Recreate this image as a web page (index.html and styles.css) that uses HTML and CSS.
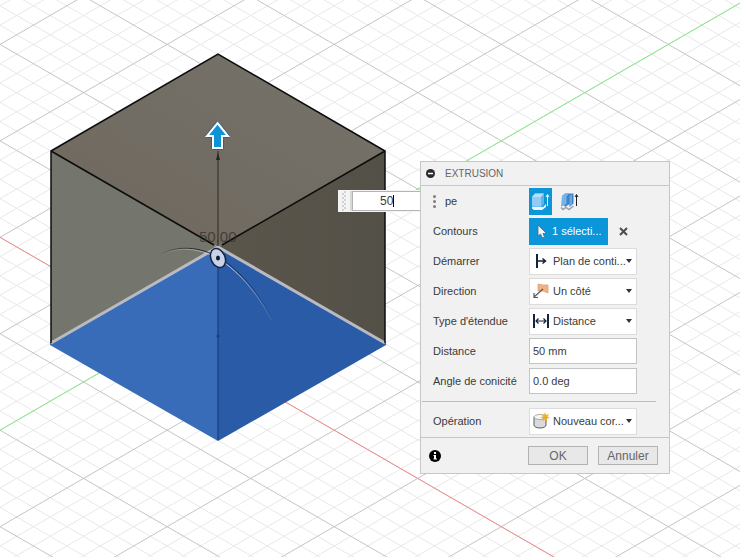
FILE: index.html
```html
<!DOCTYPE html>
<html lang="fr">
  <head>
    <meta charset="utf-8" />
    <meta name="viewport" content="width=device-width, initial-scale=1.0" />
    <title>Extrusion</title>
    <link rel="stylesheet" href="styles.css">
  </head>
  <body>
    <main class="viewport">
      <svg class="scene" aria-hidden="true">
        <defs>
          <linearGradient id="topFace" x1="0" y1="1" x2="1" y2="0">
            <stop offset="0" stop-color="#6f675e" />
            <stop offset="1" stop-color="#75736a" />
          </linearGradient>
          <linearGradient id="leftFace" x1="0" y1="0" x2="1" y2="1">
            <stop offset="0" stop-color="#74766e" />
            <stop offset="1" stop-color="#74756d" />
          </linearGradient>
          <linearGradient id="rightFace" x1="0" y1="0" x2="1" y2="0">
            <stop offset="0" stop-color="#5b564c" />
            <stop offset="1" stop-color="#535047" />
          </linearGradient>
          <linearGradient id="arc" x1="0" y1="0" x2="1" y2="0">
            <stop offset="0" stop-color="#222" stop-opacity="0.1" />
            <stop offset="0.3" stop-color="#222" />
            <stop offset="0.7" stop-color="#16335f" />
            <stop offset="1" stop-color="#16335f" stop-opacity="0.1" />
          </linearGradient>
          <linearGradient id="arcLight" x1="0" y1="0" x2="1" y2="0">
            <stop offset="0" stop-color="#ddd" stop-opacity="0" />
            <stop offset="0.6" stop-color="#c5d5ee" />
            <stop offset="1" stop-color="#c5d5ee" stop-opacity="0.1" />
          </linearGradient>
        </defs>

        <path id="minor" class="grid-minor" />
        <path id="major" class="grid-major" />
        <path id="axisX" class="axis-x" />
        <path id="axisY" class="axis-y" />

        <!-- cube -->
        <path d="M218 54 385 151 218 247 51 151Z" fill="url(#topFace)" />
        <path d="M51 151 218 247V440L51 344Z" fill="url(#leftFace)" />
        <path d="M385 151 218 247V440L385 344Z" fill="url(#rightFace)" />
        <path d="M218 247V441L50 345V343Z" fill="#386cb8" />
        <path d="M218 247V441L386 345V343Z" fill="#2a5ba6" />
        <path d="M51 343 218 247 385 343" fill="none" stroke="#b9bbc0" stroke-width="3" />
        <path class="edge" d="M51 343V151L218 54 385 151V343M51 151 214 245M385 151 222 245" />
        <path d="M218 249V440" stroke="#1d4585" stroke-width="1.5" />
        <circle cx="218" cy="336" r="1.5" fill="#1d3d75" />

        <!-- dimension line -->
        <path d="M218 151V246" stroke="#45403a" stroke-width="1.5" />
        <path d="M218 153 220 160H216Z" fill="#2a2020" />
        <text class="dimension" x="199" y="242">50.00</text>

        <!-- taper handle -->
        <path d="M161 254C174 247 195 245 216 256S258 291 273 320" fill="none" stroke="url(#arc)" />
        <path d="M162 255C175 248 194 246 215 257S257 292 272 321" fill="none" stroke="url(#arcLight)" />
        <ellipse cx="218" cy="258" rx="7" ry="10" transform="rotate(-24 218 258)" fill="#c8d3e9" stroke="#13243f" stroke-width="1.5" />
        <ellipse cx="218" cy="258" rx="2" ry="2.5" fill="#111c2c" />

        <!-- distance arrow -->
        <path d="M217.500 123 228 136H222V148H213V136H207Z" fill="none" stroke="#31597a" stroke-width="3.500" stroke-linejoin="round" />
        <path d="M217.500 123 228 136H222V148H213V136H207Z" fill="#0b94d6" stroke="#fff" stroke-width="2" />
      </svg>

      <div class="quick-input">
        <span class="grip"></span>
        <input class="quick-field" type="text" value="50" aria-label="Distance rapide">
        <span class="caret"></span>
      </div>

      <form class="panel">
        <header class="panel-header">
          <svg class="collapse" viewBox="0 0 9 9"><circle cx="4.500" cy="4.500" r="4.500" fill="#2b2b2b" /><path d="M2 4.500H7" stroke="#fff" stroke-width="1.500" /></svg>
          <h1 class="panel-title">EXTRUSION</h1>
        </header>

        <div class="row">
          <span class="label type-label">
            <svg class="dots" viewBox="0 0 3 13"><g fill="#7d7d7d"><circle cx="1.500" cy="1.500" r="1.500" /><circle cx="1.500" cy="6.500" r="1.500" /><circle cx="1.500" cy="11.500" r="1.500" /></g></svg>
            pe
          </span>
          <button class="type-btn active" type="button" aria-label="Extrusion">
            <svg class="type-icon" viewBox="0 0 19 19">
              <path d="M1 16.500 3 18H11L15 15V12L12 15H1Z" fill="#eef7fd" />
              <path d="M1 5 4 1.500H13V12L10.500 15H2L1 14Z" fill="#5fb2ea" />
              <path d="M1 5H10V14.500H2L1 14Z" fill="#8fccf6" />
              <path d="M1 5 4 1.500H13L10 5Z" fill="#b8e0fb" />
              <path d="M16.500 14V3M15 5 16.500 2.500 18 5" fill="none" stroke="#fff" />
            </svg>
          </button>
          <button class="type-btn" type="button" aria-label="Extrusion fine">
            <svg class="type-icon" viewBox="0 0 19 19">
              <path d="M1 15.500 3 17.500 6 15.500 9 17.500 13.500 14" fill="none" stroke="#98a2ac" stroke-width="1.500" />
              <path d="M2 4 5 1.500H13.500V11.500L9.500 15V12L5 15 4 13 1.500 14.500Z" fill="#3c84c9" />
              <path d="M2 4 5 1.500H9L6.500 4.500V12L4 13 1.500 14.500Z" fill="#75b4e8" />
              <path d="M9.500 4.500 12 2V12L9.500 14.500Z" fill="#68a9e2" />
              <path d="M16.500 14V3M15 5 16.500 2.500 18 5" fill="none" stroke="#222" />
            </svg>
          </button>
        </div>

        <div class="row">
          <span class="label">Contours</span>
          <button class="select-btn" type="button">
            <svg class="cursor" viewBox="0 0 10 15"><path d="M1 1V12L3.500 10 5.500 14 7.500 13 6 9.500H9.500Z" fill="#f4f4f4" stroke="#4c6d86" stroke-width="0.800" /></svg>
            1 sélecti...
          </button>
          <button class="clear-btn" type="button" aria-label="Effacer">
            <svg class="cross" viewBox="0 0 9 9"><path d="M1 1 8 8M8 1 1 8" stroke="#4d4d4d" stroke-width="2" /></svg>
          </button>
        </div>

        <div class="row">
          <label class="label" for="start">Démarrer</label>
          <div class="combo">
            <svg class="combo-icon" viewBox="0 0 18 18"><path d="M5 2V16" stroke="#14233b" stroke-width="2" /><path d="M5 9H13M10.500 6.500 13.500 9 10.500 11.500" fill="none" stroke="#14233b" stroke-width="1.500" /></svg>
            <select id="start"><option>Plan de conti...</option></select>
            <svg class="arrow" viewBox="0 0 6 4"><path d="M0 0H6L3 4Z" fill="#333" /></svg>
          </div>
        </div>

        <div class="row">
          <label class="label" for="direction">Direction</label>
          <div class="combo">
            <svg class="combo-icon" viewBox="0 0 18 18">
              <path d="M6 2 11 3 16 3V11L11 9 6 9Z" fill="#f0b184" stroke="#dca17a" stroke-width="0.800" />
              <path d="M11 7 2 15M2 11V15.500H6" fill="none" stroke="#59575a" stroke-width="1.200" />
            </svg>
            <select id="direction"><option>Un côté</option></select>
            <svg class="arrow" viewBox="0 0 6 4"><path d="M0 0H6L3 4Z" fill="#333" /></svg>
          </div>
        </div>

        <div class="row">
          <label class="label" for="extent">Type d'étendue</label>
          <div class="combo">
            <svg class="combo-icon" viewBox="0 0 18 18"><path d="M2 2V16M16 2V16" stroke="#14233b" stroke-width="2" /><path d="M4 9H14M6.500 6.500 4 9 6.500 11.500M11.500 6.500 14 9 11.500 11.500" fill="none" stroke="#14233b" stroke-width="1.200" /></svg>
            <select id="extent"><option>Distance</option></select>
            <svg class="arrow" viewBox="0 0 6 4"><path d="M0 0H6L3 4Z" fill="#333" /></svg>
          </div>
        </div>

        <div class="row">
          <label class="label" for="distance">Distance</label>
          <input class="field" id="distance" type="text" value="50 mm">
        </div>

        <div class="row">
          <label class="label" for="taper">Angle de conicité</label>
          <input class="field" id="taper" type="text" value="0.0 deg">
        </div>

        <hr class="separator">

        <div class="row">
          <label class="label" for="operation">Opération</label>
          <div class="combo">
            <svg class="combo-icon" viewBox="0 0 18 18">
              <path d="M2 5V13C2 17 14 17 14 13V5Z" fill="#d9dadc" stroke="#5c5c5c" />
              <ellipse cx="8" cy="5" rx="6" ry="2.500" fill="#f6f6f6" stroke="#999" stroke-width="0.800" />
              <path d="M13 0 14 3 17 2 15.500 4.500 18 6 15 6.500 15 9.500 13 7.500 10.500 9 11 6.500 8.500 5.500 11 4.500 10 2 12 3Z" fill="#edad27" />
            </svg>
            <select id="operation"><option>Nouveau cor...</option></select>
            <svg class="arrow" viewBox="0 0 6 4"><path d="M0 0H6L3 4Z" fill="#333" /></svg>
          </div>
        </div>

        <footer class="panel-footer">
          <svg class="info" viewBox="0 0 12 12"><circle cx="6" cy="6" r="6" fill="#000" /><path d="M5 2H7V4H5ZM4.500 5H7V8.500H8V9.500H4.500V8.500H5V6H4.500Z" fill="#fff" /></svg>
          <button class="action" type="submit">OK</button>
          <button class="action" type="button">Annuler</button>
        </footer>
      </form>
    </main>

    <script src="script.js"></script>
  </body>
</html>
```
FILE: styles.css
```css
* {
  box-sizing: border-box;
}

body {
  margin: 0;
  background-color: #fff;
  color: #3a3a3a;
  font-family: "Liberation Sans", Arial, sans-serif;
  font-size: 11px;
}

button,
input,
select {
  margin: 0;
  padding: 0;
  border: none;
  border-radius: 0;
  font: inherit;
  color: inherit;
}

svg {
  display: block;
  flex: none;
}

.viewport {
  position: relative;
  min-height: 100vh;
  overflow: hidden;
}

.scene {
  position: absolute;
  top: 0;
  left: 0;
  width: 100%;
  height: 100%;
}

.grid-minor {
  stroke: #e8e8e8;
}

.grid-major {
  stroke: #c4c4c4;
}

.axis-x {
  stroke: #f58e8e;
}

.axis-y {
  stroke: #8cf08c;
}

.edge {
  fill: none;
  stroke: #0c0c0c;
  stroke-width: 1.5;
}

.dimension {
  font-size: 15px;
  fill: #35302b;
  opacity: 0.75;
}

/* floating value box next to the cube */
.quick-input {
  position: absolute;
  top: 190px;
  left: 338px;
  display: flex;
  align-items: center;
  width: 84px;
  height: 22px;
  padding-left: 4px;
  background-color: #f4f4f4;
}

.grip {
  width: 10px;
  height: 20px;
  border-right: 2px solid #d8d8d8;
  background: repeating-conic-gradient(#d2d2d2 0 25%, #f4f4f4 0 50%) 0 0 / 4px 4px;
  background-clip: content-box;
  padding-right: 4px;
}

.quick-field {
  flex: 1;
  min-width: 0;
  height: 20px;
  padding-left: 27px;
  border: 1px solid #b4b4b4;
  background-color: #fff;
  font-size: 12px;
}

.caret {
  position: absolute;
  top: 5px;
  left: 55px;
  width: 1px;
  height: 12px;
  background-color: #000;
}

/* dialog */
.panel {
  position: absolute;
  top: 161px;
  left: 420px;
  width: 250px;
  border: 1px solid #c6c6c6;
  background-color: #f1f1f1;
}

.panel-header {
  display: flex;
  align-items: center;
  gap: 10px;
  height: 24px;
  padding-left: 5px;
  border-bottom: 1px solid #c6c6c6;
}

.collapse {
  width: 9px;
  height: 9px;
}

.panel-title {
  margin: 0;
  color: #666;
  font-size: 10px;
  font-weight: normal;
}

.row {
  display: flex;
  align-items: center;
  height: 30px;
  padding-left: 12px;
}

.label {
  flex: none;
  width: 96px;
}

.type-label {
  display: flex;
  align-items: center;
  gap: 9px;
}

.dots {
  width: 3px;
  height: 13px;
}

.type-btn {
  display: flex;
  align-items: center;
  justify-content: center;
  width: 23px;
  height: 27px;
  margin-right: 6px;
  background: none;
}

.type-btn.active {
  background-color: #0a96d8;
}

.type-icon {
  width: 19px;
  height: 19px;
}

.select-btn {
  display: flex;
  align-items: center;
  gap: 5px;
  width: 79px;
  height: 27px;
  padding-left: 8px;
  background-color: #0a96d8;
  color: #fff;
}

.cursor {
  width: 10px;
  height: 15px;
}

.clear-btn {
  margin-left: 11px;
  background: none;
}

.cross {
  width: 9px;
  height: 9px;
}

.combo {
  display: flex;
  align-items: center;
  width: 108px;
  height: 27px;
  padding: 0 4px 0 2px;
  border: 1px solid #dcdcdc;
  background-color: #fff;
}

.combo-icon {
  width: 18px;
  height: 18px;
  margin-right: 3px;
}

.combo select {
  flex: 1;
  min-width: 0;
  height: 100%;
  appearance: none;
  background: none;
}

.arrow {
  width: 6px;
  height: 4px;
}

.field {
  width: 108px;
  height: 26px;
  padding-left: 3px;
  border: 1px solid #c4c4c4;
  background-color: #fff;
}

.separator {
  height: 1px;
  margin: 5px 13px 4px 1px;
  border: none;
  background-color: #bdbdbd;
}

.panel-footer {
  display: flex;
  align-items: center;
  gap: 10px;
  height: 36px;
  margin-top: 1px;
  padding: 0 11px 0 8px;
  border-top: 1px solid #c6c6c6;
}

.info {
  width: 12px;
  height: 12px;
  margin-right: auto;
}

.action {
  width: 60px;
  height: 19px;
  border: 1px solid #b2b2b2;
  background-color: #e8e8e8;
  color: #666;
  font-size: 12px;
}
```
FILE: script.js
```js
// isometric ground grid, one major cell = 5 minor cells
const cellW = 167.1;
const cellH = 96.45;
const slope = cellH / cellW;
const originY = 44.4;
const reach = 3000;

function line(y, k) {
  return `M0 ${y}L${reach} ${y + k * reach}`;
}

function grid(step, skip) {
  let d = "";
  for (let i = -200; i < 200; i++) {
    if (skip && i % skip === 0) continue;
    const y = originY + i * step;
    d += line(y, slope) + line(y, -slope);
  }
  return d;
}

document.getElementById("minor").setAttribute("d", grid(cellH / 5, 5));
document.getElementById("major").setAttribute("d", grid(cellH));
document.getElementById("axisX").setAttribute("d", line(originY + 2 * cellH, slope));
document.getElementById("axisY").setAttribute("d", line(originY + 4 * cellH, -slope));
```
